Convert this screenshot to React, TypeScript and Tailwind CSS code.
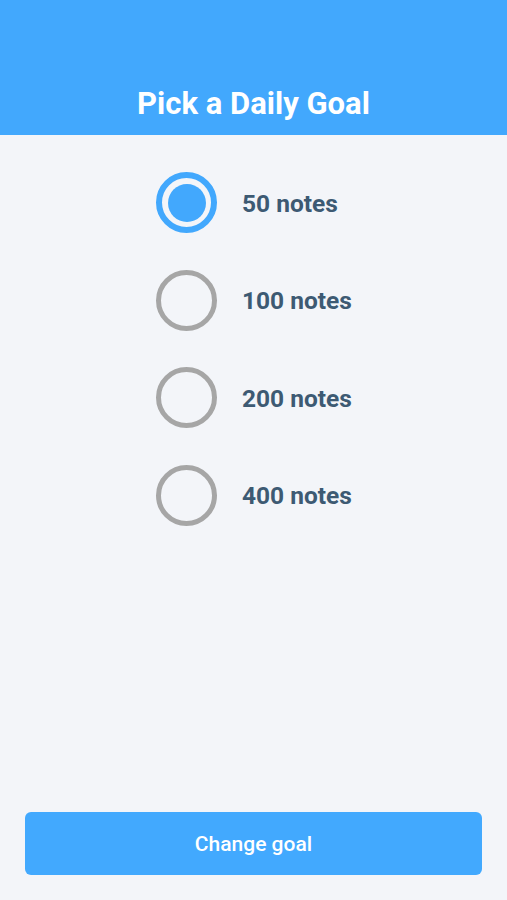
import React, { useState } from "react";

const goals = [50, 100, 200, 400];

export default function App() {
  const [sel, setSel] = useState(50);
  return (
    <div className="w-[507px] h-[900px] bg-[#f3f5f9] flex flex-col" style={{ fontFamily: "Roboto, 'Noto Sans', sans-serif" }}>
      <div className="h-[135px] bg-[#42a8fd] flex items-end justify-center pb-[13px] shrink-0">
        <h1 className="text-white font-bold text-[31px] leading-[36px]">Pick a Daily Goal</h1>
      </div>
      <div className="flex flex-col items-start pl-[156px] pt-[37px] gap-[36.6px]">
        {goals.map((g) => (
          <button key={g} onClick={() => setSel(g)} className="flex items-center gap-[25px]">
            {sel === g ? (
              <span className="w-[61px] h-[61px] rounded-full border-[6px] border-[#42a8fd] flex items-center justify-center">
                <span className="w-[38px] h-[38px] rounded-full bg-[#42a8fd]" />
              </span>
            ) : (
              <span className="w-[61px] h-[61px] rounded-full border-[5px] border-[#a6a6a6]" />
            )}
            <span className="text-[24.5px] font-bold text-[#3d5a73] pt-[3px]">{g} notes</span>
          </button>
        ))}
      </div>
      <div className="flex-1" />
      <div className="px-[25px] pb-[25px]">
        <button className="w-full h-[63px] rounded-[6px] bg-[#42a9fe] text-white text-[21px] font-medium pt-[3px]">Change goal</button>
      </div>
    </div>
  );
}
